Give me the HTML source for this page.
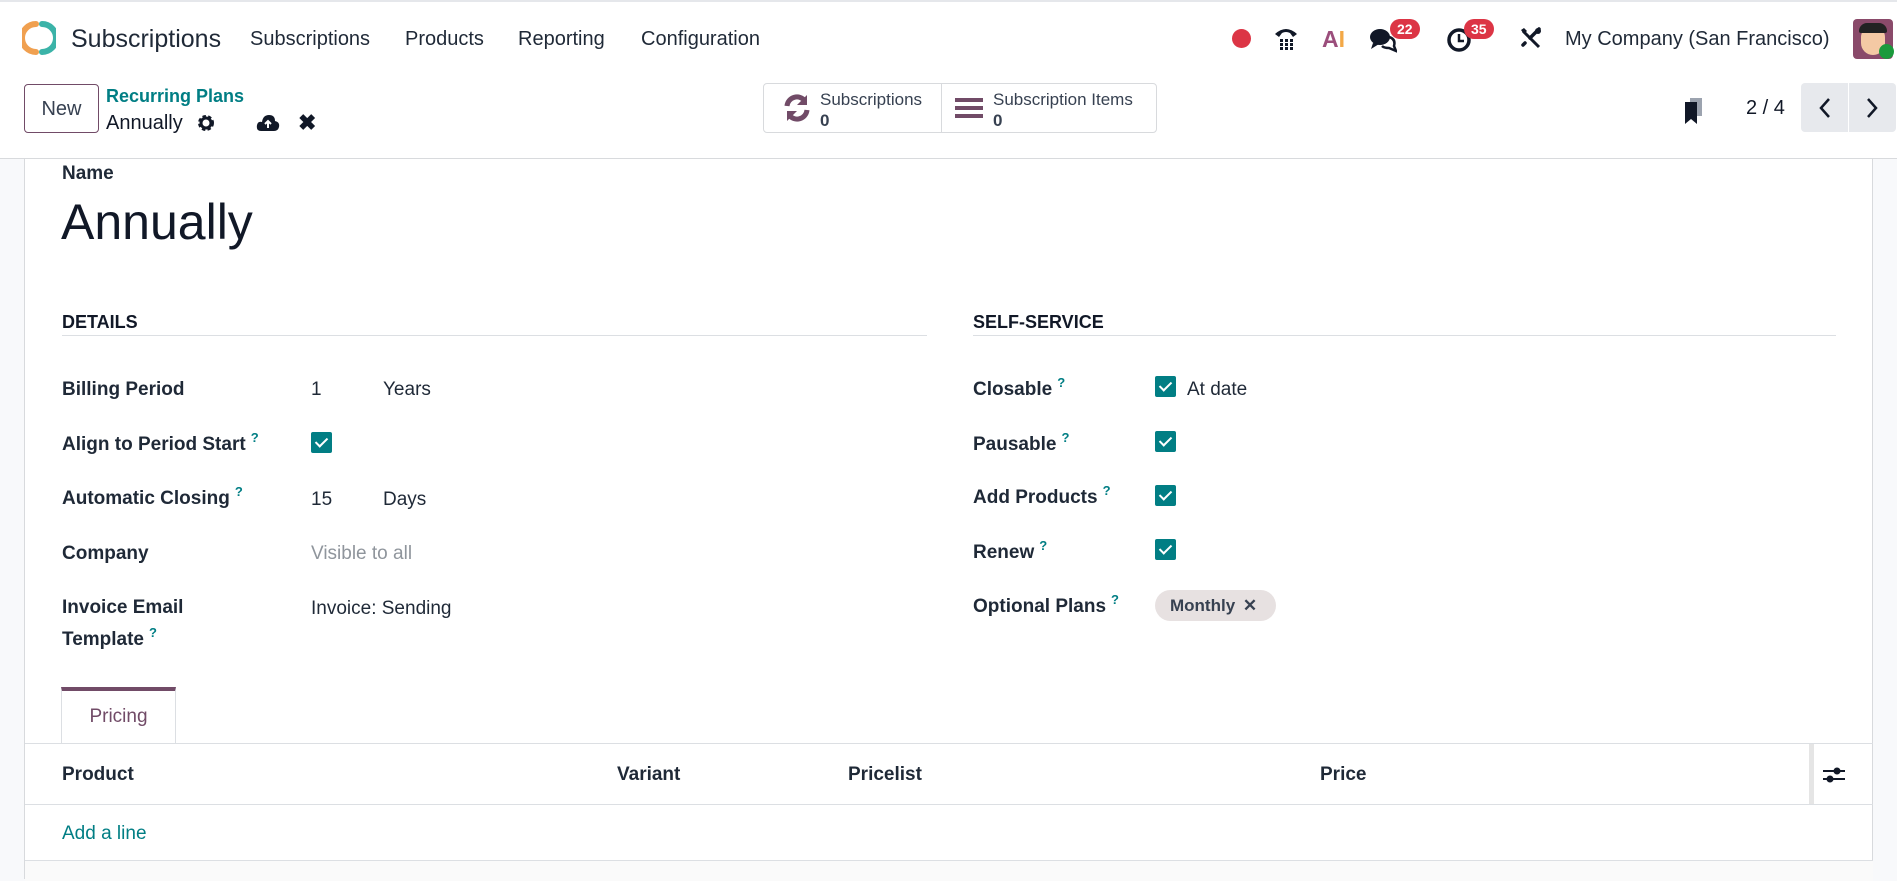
<!DOCTYPE html>
<html><head><meta charset="utf-8"><style>
*{box-sizing:border-box;margin:0;padding:0}
body{width:1897px;height:879px;overflow:hidden;background:#f8f9fb;font-family:"Liberation Sans",sans-serif;color:#1f2937;position:relative;font-size:19px}
.a{position:absolute;white-space:nowrap}
.nav{position:absolute;left:0;top:0;width:1897px;height:76px;background:#fff;border-top:2px solid #e5e7eb}
.cp{position:absolute;left:0;top:76px;width:1897px;height:83px;background:#fff;border-bottom:1px solid #d8dadd}
.sheet{position:absolute;left:24px;top:159px;width:1849px;height:720px;background:#fff;border-left:1px solid #d8dadd;border-right:1px solid #d8dadd}
.lbl{font-weight:bold;font-size:19px;color:#1f2937}
.q{color:#017e84;font-size:13px;font-weight:bold;vertical-align:top;margin-left:5px;position:relative;top:-4px}
.cb{position:absolute;width:21px;height:21px;background:#017e84;border-radius:2px}
.cb:after{content:"";position:absolute;left:7px;top:3px;width:5px;height:10px;border:solid #fff;border-width:0 2.5px 2.5px 0;transform:rotate(45deg)}
.badge{position:absolute;background:#dc3545;color:#fff;font-size:14px;font-weight:bold;border-radius:10px;padding:2px 7px}
.sep{position:absolute;height:1px;background:#dcdfe3}
</style></head><body>
<div class="nav">
 <svg class="a" style="left:22px;top:18px" width="34" height="36" viewBox="0 0 34 36"><path d="M14 4 A14 14 0 0 0 14 32" fill="none" stroke="#f0a050" stroke-width="6" stroke-linecap="round"/><path d="M20 4 A14 14 0 0 1 20 32" fill="none" stroke="#3bb3a8" stroke-width="6" stroke-linecap="round"/></svg>
 <div class="a" style="left:71px;top:23px;font-size:25px;color:#1f2937">Subscriptions</div>
 <div class="a" style="left:250px;top:26px;font-size:20px">Subscriptions</div>
 <div class="a" style="left:405px;top:26px;font-size:20px">Products</div>
 <div class="a" style="left:518px;top:26px;font-size:20px">Reporting</div>
 <div class="a" style="left:641px;top:26px;font-size:20px">Configuration</div>
 <div class="a" style="left:1232px;top:27px;width:19px;height:19px;border-radius:50%;background:#dc3545"></div>
 <svg class="a" style="left:1273px;top:22px" width="26" height="28" viewBox="0 0 26 28"><path d="M2 10 Q13 0 24 10 L20 13 L17 9 Q13 7 9 9 L6 13Z" fill="#111827"/><g fill="#111827"><rect x="7" y="15" width="3" height="3"/><rect x="12" y="15" width="3" height="3"/><rect x="17" y="15" width="3" height="3"/><rect x="7" y="19" width="3" height="3"/><rect x="12" y="19" width="3" height="3"/><rect x="17" y="19" width="3" height="3"/><rect x="7" y="23" width="3" height="3"/><rect x="12" y="23" width="3" height="3"/><rect x="17" y="23" width="3" height="3"/></g></svg>
 <div class="a" style="left:1322px;top:24px;font-size:23px;font-weight:bold"><span style="color:#9b4e7c">A</span><span style="color:#f3a846">I</span></div>
 <svg class="a" style="left:1369px;top:25px" width="28" height="26" viewBox="0 0 28 26"><ellipse cx="11" cy="10" rx="10" ry="8" fill="#111827"/><path d="M4 16 L2 22 L10 17Z" fill="#111827"/><path d="M20 10 Q27 12 25 19 L27 24 L20 21 Q15 21 13 19" fill="none" stroke="#111827" stroke-width="2.5"/></svg>
 <div class="badge" style="left:1390px;top:17px">22</div>
 <svg class="a" style="left:1447px;top:25px" width="26" height="26" viewBox="0 0 26 26"><circle cx="12" cy="13" r="10" fill="none" stroke="#111827" stroke-width="3.5"/><path d="M12 7 V14 H17" fill="none" stroke="#111827" stroke-width="2.5"/></svg>
 <div class="badge" style="left:1464px;top:17px">35</div>
 <svg class="a" style="left:1519px;top:25px" width="24" height="24" viewBox="0 0 24 24"><path d="M4 4 L20 20" stroke="#111827" stroke-width="3"/><path d="M2 3 L5 1 L8 4 L5 7Z" fill="#111827"/><path d="M20 2 L11 11 M6 16 L4 18" stroke="#111827" stroke-width="3.5" stroke-linecap="round"/><circle cx="19" cy="4" r="3" fill="#111827"/></svg>
 <div class="a" style="left:1565px;top:26px;font-size:20px">My Company (San Francisco)</div>
 <div class="a" style="left:1853px;top:17px;width:40px;height:40px;border-radius:4px;background:#8a4a6a"><div style="position:absolute;left:8px;top:8px;width:24px;height:28px;background:#f4c9a4;border-radius:10px 10px 12px 12px"></div><div style="position:absolute;left:6px;top:4px;width:28px;height:10px;background:#222;border-radius:8px 8px 2px 2px"></div></div>
 <div class="a" style="left:1879px;top:42px;width:15px;height:15px;border-radius:50%;background:#1a9a3c"></div>
</div>
<div class="cp">
 <div class="a" style="left:24px;top:8px;width:75px;height:49px;border:1px solid #714b67;border-radius:4px;font-size:20px;color:#374151;text-align:center;line-height:49px">New</div>
 <div class="a" style="left:106px;top:10px;font-size:18px;font-weight:bold;color:#017e84">Recurring Plans</div>
 <div class="a" style="left:106px;top:36px;font-size:20px;color:#111827">Annually</div>
 <svg class="a" style="left:196px;top:37px" width="20" height="20" viewBox="0 0 20 20"><circle cx="10" cy="10" r="6" fill="none" stroke="#111827" stroke-width="4" stroke-dasharray="3 2"/><circle cx="10" cy="10" r="5" fill="none" stroke="#111827" stroke-width="3"/></svg>
 <svg class="a" style="left:256px;top:38px" width="24" height="18" viewBox="0 0 24 18"><path d="M5 17 Q0 17 1 11 Q2 7 6 8 Q7 1 13 1 Q19 1 19 7 Q24 8 23 13 Q22 17 18 17Z" fill="#111827"/><path d="M12 14 V7 M9 10 L12 7 L15 10" stroke="#fff" stroke-width="2" fill="none"/></svg>
 <div class="a" style="left:298px;top:34px;font-size:22px;font-weight:bold;color:#111827">✖</div>
 <div class="a" style="left:763px;top:7px;width:394px;height:50px;border:1px solid #d8dadd;border-radius:4px"></div>
 <div class="a" style="left:941px;top:7px;width:1px;height:50px;background:#d8dadd"></div>
 <svg class="a" style="left:782px;top:17px" width="30" height="30" viewBox="0 0 30 30"><path d="M5 13 A10 10 0 0 1 23 8" fill="none" stroke="#714b67" stroke-width="5"/><path d="M25 2 V12 H15Z" fill="#714b67"/><path d="M25 17 A10 10 0 0 1 7 22" fill="none" stroke="#714b67" stroke-width="5"/><path d="M5 28 V18 H15Z" fill="#714b67"/></svg>
 <div class="a" style="left:820px;top:14px;font-size:17px;color:#374151">Subscriptions</div>
 <div class="a" style="left:820px;top:35px;font-size:17px;font-weight:bold;color:#374151">0</div>
 <svg class="a" style="left:955px;top:20px" width="28" height="24" viewBox="0 0 28 24"><rect x="0" y="2" width="28" height="4" fill="#714b67"/><rect x="0" y="10" width="28" height="4" fill="#714b67"/><rect x="0" y="18" width="28" height="4" fill="#714b67"/></svg>
 <div class="a" style="left:993px;top:14px;font-size:17px;color:#374151">Subscription Items</div>
 <div class="a" style="left:993px;top:35px;font-size:17px;font-weight:bold;color:#374151">0</div>
 <svg class="a" style="left:1683px;top:22px" width="22" height="26" viewBox="0 0 22 26"><rect x="7" y="0" width="12" height="18" fill="#9ca3af"/><path d="M2 4 H14 V26 L8 21 L2 26Z" fill="#111827"/></svg>
 <div class="a" style="left:1746px;top:21px;font-size:20px;color:#111827">2 / 4</div>
 <div class="a" style="left:1801px;top:7px;width:95px;height:49px;background:#e7e9ed;border-radius:4px"></div>
 <div class="a" style="left:1848px;top:7px;width:1px;height:49px;background:#fff"></div>
 <svg class="a" style="left:1815px;top:20px" width="20" height="24" viewBox="0 0 20 24"><path d="M14 3 L6 12 L14 21" fill="none" stroke="#111827" stroke-width="2.5"/></svg>
 <svg class="a" style="left:1862px;top:20px" width="20" height="24" viewBox="0 0 20 24"><path d="M6 3 L14 12 L6 21" fill="none" stroke="#111827" stroke-width="2.5"/></svg>
</div>
<div class="sheet">
 <div class="a lbl" style="left:37px;top:4px">Name</div>
 <div class="a" style="left:36px;top:34px;font-size:50px;color:#111827">Annually</div>
 <div class="a lbl" style="left:37px;top:153px;font-size:18px;color:#111827">DETAILS</div>
 <div class="sep" style="left:37px;top:176px;width:865px"></div>
 <div class="a lbl" style="left:948px;top:153px;font-size:18px;color:#111827">SELF-SERVICE</div>
 <div class="sep" style="left:948px;top:176px;width:863px"></div>

 <div class="a lbl" style="left:37px;top:220px">Billing Period</div>
 <div class="a" style="left:286px;top:220px">1</div>
 <div class="a" style="left:358px;top:220px">Years</div>
 <div class="a lbl" style="left:37px;top:275px">Align to Period Start<span class="q">?</span></div>
 <div class="cb" style="left:286px;top:273px"></div>
 <div class="a lbl" style="left:37px;top:329px">Automatic Closing<span class="q">?</span></div>
 <div class="a" style="left:286px;top:330px">15</div>
 <div class="a" style="left:358px;top:330px">Days</div>
 <div class="a lbl" style="left:37px;top:384px">Company</div>
 <div class="a" style="left:286px;top:384px;color:#8f959c">Visible to all</div>
 <div class="a lbl" style="left:37px;top:438px">Invoice Email</div>
 <div class="a lbl" style="left:37px;top:470px">Template<span class="q">?</span></div>
 <div class="a" style="left:286px;top:439px">Invoice: Sending</div>

 <div class="a lbl" style="left:948px;top:220px">Closable<span class="q">?</span></div>
 <div class="cb" style="left:1130px;top:217px"></div>
 <div class="a" style="left:1162px;top:220px">At date</div>
 <div class="a lbl" style="left:948px;top:275px">Pausable<span class="q">?</span></div>
 <div class="cb" style="left:1130px;top:272px"></div>
 <div class="a lbl" style="left:948px;top:328px">Add Products<span class="q">?</span></div>
 <div class="cb" style="left:1130px;top:326px"></div>
 <div class="a lbl" style="left:948px;top:383px">Renew<span class="q">?</span></div>
 <div class="cb" style="left:1130px;top:380px"></div>
 <div class="a lbl" style="left:948px;top:437px">Optional Plans<span class="q">?</span></div>
 <div class="a" style="left:1130px;top:431px;width:121px;height:31px;background:#e7e1e1;border-radius:16px;font-size:17px;font-weight:bold;color:#374151;line-height:31px;padding-left:15px">Monthly <span style="margin-left:3px">✕</span></div>

 <div class="a" style="left:36px;top:528px;width:115px;height:57px;border:1px solid #dcdfe3;border-bottom:none;border-top:4px solid #714b67;background:#fff;font-size:19px;color:#714b67;text-align:center;line-height:52px">Pricing</div>
 <div class="sep" style="left:0;top:584px;width:1848px"></div>
 <div class="a lbl" style="left:37px;top:605px">Product</div>
 <div class="a lbl" style="left:592px;top:605px">Variant</div>
 <div class="a lbl" style="left:823px;top:605px">Pricelist</div>
 <div class="a lbl" style="left:1295px;top:605px">Price</div>
 <div class="a" style="left:1784px;top:585px;width:5px;height:60px;background:#e5e5e5"></div>
 <svg class="a" style="left:1797px;top:606px" width="24" height="20" viewBox="0 0 24 20"><path d="M1 6 H23 M1 14 H23" stroke="#111827" stroke-width="2"/><circle cx="15" cy="6" r="3.5" fill="#111827"/><circle cx="8" cy="14" r="3.5" fill="#111827"/></svg>
 <div class="sep" style="left:0;top:645px;width:1848px"></div>
 <div class="a" style="left:37px;top:664px;font-size:19px;color:#017e84">Add a line</div>
 <div class="sep" style="left:0;top:701px;width:1848px"></div>
 <div class="a" style="left:0;top:702px;width:1848px;height:20px;background:#fafafa"></div>
</div>
</body></html>
